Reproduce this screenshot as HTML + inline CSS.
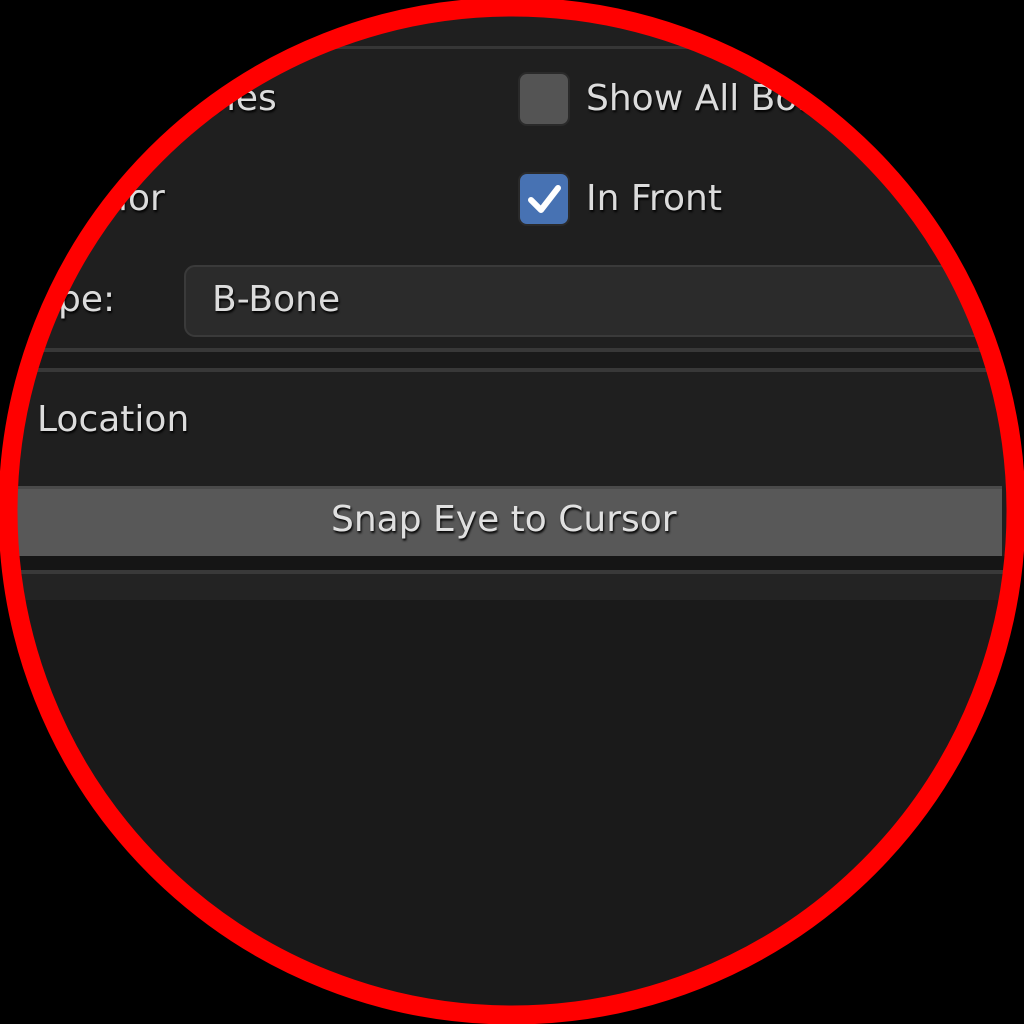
<!DOCTYPE html>
<html><head><style>
html,body{margin:0;padding:0;background:#000;width:1024px;height:1024px;overflow:hidden}
#c{position:absolute;left:0;top:0;width:1024px;height:1024px;clip-path:circle(505px at 512px 511px);background:#1d1d1d;font-family:"DejaVu Sans","Liberation Sans",sans-serif;color:#dcdcdc;font-size:36px}
.a{position:absolute}
.t{position:absolute;line-height:1;white-space:nowrap;text-shadow:1px 2px 2px #000}
#ring{position:absolute;left:0;top:0;width:1024px;height:1024px}
</style></head><body>
<div id="c">
 <div class="a" style="left:0;top:0;width:1024px;height:350px;background:#1f1f1f"></div>
 <div class="a" style="left:0;top:46px;width:1024px;height:3px;background:#363636"></div>
 <div class="t" style="left:213px;top:81px">nes</div>
 <div class="a" style="left:520px;top:74px;width:48px;height:50px;border-radius:7px;background:#545454;box-shadow:0 0 0 2px #2a2a2a"></div>
 <div class="t" style="left:586px;top:81px">Show All Bones</div>
 <div class="t" style="left:118px;top:181px">lor</div>
 <div class="a" style="left:520px;top:174px;width:48px;height:50px;border-radius:7px;background:#4772b3;box-shadow:0 0 0 2px #2a2a2a"></div>
 <svg class="a" style="left:520px;top:174px" width="48" height="50"><path d="M11 26 L21 36 L38 14" stroke="#fff" stroke-width="6" fill="none" stroke-linecap="round" stroke-linejoin="round"/></svg>
 <div class="t" style="left:586px;top:181px">In Front</div>
 <div class="t" style="left:36px;top:282px">ape:</div>
 <div class="a" style="left:184px;top:265px;width:900px;height:68px;border-radius:11px;background:#2b2b2b;border:2px solid #3a3a3a"></div>
 <div class="t" style="left:212px;top:282px">B-Bone</div>
 <div class="a" style="left:0;top:348px;width:1024px;height:4px;background:#383838"></div>
 <div class="a" style="left:0;top:352px;width:1024px;height:16px;background:#1a1a1a"></div>
 <div class="a" style="left:0;top:368px;width:1024px;height:4px;background:#383838"></div>
 <div class="a" style="left:0;top:372px;width:1024px;height:186px;background:#1f1f1f"></div>
 <div class="t" style="left:37px;top:402px">Location</div>
 <div class="a" style="left:0;top:486px;width:1002px;height:70px;background:#585858;border-top:3px solid #4a4a4a;box-sizing:border-box"></div>
 <div class="t" style="left:331px;top:502px;color:#e0e0e0">Snap Eye to Cursor</div>
 <div class="a" style="left:0;top:556px;width:1024px;height:14px;background:#151515"></div>
 <div class="a" style="left:0;top:570px;width:1024px;height:4px;background:#393939"></div>
 <div class="a" style="left:0;top:574px;width:1024px;height:26px;background:#232323"></div>
 <div class="a" style="left:0;top:600px;width:1024px;height:424px;background:#1a1a1a"></div>
</div>
<svg id="ring" width="1024" height="1024"><circle cx="512" cy="511" r="504" fill="none" stroke="#ff0000" stroke-width="19"/></svg>
</body></html>
